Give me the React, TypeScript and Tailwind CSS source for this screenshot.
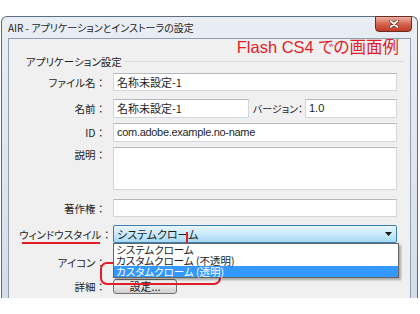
import React from "react";

const jp = "font-['Noto_Sans_CJK_JP',sans-serif] [font-feature-settings:'palt']";
const latin = "font-['Liberation_Sans','Noto_Sans_CJK_JP',sans-serif]";

function Colon() {
  return <span className="[font-feature-settings:normal]">：</span>;
}

function Row({
  label,
  labelTop = false,
  className = "",
  children,
}: {
  label: string;
  labelTop?: boolean;
  className?: string;
  children: React.ReactNode;
}) {
  return (
    <div className={`flex shrink-0 ${labelTop ? "items-start" : "items-center"} ${className}`}>
      <div
        className={`w-[87px] shrink-0 whitespace-nowrap text-right text-[10.5px] leading-[13px] ${labelTop ? "pt-[1px]" : ""}`}
      >
        {label}
        <Colon />
      </div>
      <div className="relative ml-[7px] flex flex-1 items-center">{children}</div>
    </div>
  );
}

const box = "flex items-center whitespace-nowrap border border-[#d3d6db] border-t-[#b4b8bf] bg-white pl-[3px] text-[11px]";

function CloseButton() {
  return (
    <div className="absolute right-[5px] top-[-1px] flex h-[16px] w-[37px] items-center justify-center rounded-b-[4px] border border-[#6e2c24] bg-gradient-to-b from-[#eab0a4] via-[#d4644f] to-[#c13a24]">
      <svg width="10" height="8" viewBox="0 0 10 8">
        <path d="M1.5 1 L8.5 7 M8.5 1 L1.5 7" stroke="#5a1a14" strokeWidth="3" strokeLinecap="round" />
        <path d="M1.5 1 L8.5 7 M8.5 1 L1.5 7" stroke="#ffffff" strokeWidth="1.8" strokeLinecap="round" />
      </svg>
    </div>
  );
}

export default function App() {
  return (
    <div className={`relative h-[314px] w-[420px] overflow-hidden bg-white text-[#1e1e1e] ${jp}`}>
      <div className="ml-[1px] mt-[16px] flex h-[282px] w-[417px] flex-col rounded-t-[6px] border border-b-0 border-[#5d6d80] bg-gradient-to-b from-[#e9eef4] to-[#d5dee8]">
        {/* title bar */}
        <div className="relative flex h-[21px] shrink-0 items-center whitespace-nowrap pl-[6px] text-[10px]">
          AIR - アプリケーションとインストーラの設定
          <CloseButton />
        </div>

        {/* client area */}
        <div className="mx-[6px] flex flex-1 flex-col overflow-hidden border border-b-0 border-[#8f9eb0] bg-[#f0f0f0]">
          <div
            className={`flex h-[17px] shrink-0 items-end justify-end whitespace-nowrap pr-[11px] text-[16.5px] leading-[17px] text-[#e11d2a] ${latin}`}
          >
            Flash CS4 での画面例
          </div>

          <div className="flex h-[11px] shrink-0 items-center pl-[17px] pr-[6px]">
            <span className="whitespace-nowrap text-[10.5px] leading-[11px]">アプリケーション設定</span>
            <div className="ml-[3px] h-px flex-1 bg-[#d5dfe5]" />
          </div>

          <div className="flex flex-col pl-[10px] pr-[13px]">
            <Row label="ファイル名" className="mt-[6px] h-[18px]">
              <div className={`${box} h-[18px] flex-1`}>名称未設定-1</div>
            </Row>

            <Row label="名前" className="mt-[8px] h-[19px]">
              <div className={`${box} h-[19px] w-[136px]`}>名称未設定-1</div>
              <div className="w-[56px] whitespace-nowrap pr-[2px] text-right text-[10px]">バージョン：</div>
              <div className={`${box} h-[19px] flex-1 ${latin} text-[10px]`}>1.0</div>
            </Row>

            <Row label="ID" className="mt-[5px] h-[19px]">
              <div className={`${box} h-[19px] flex-1 ${latin} text-[10px] tracking-[-0.3px]`}>
                com.adobe.example.no-name
              </div>
            </Row>

            <Row label="説明" labelTop className="mt-[5px] h-[43px]">
              <div className={`${box} h-[43px] flex-1`} />
            </Row>

            <Row label="著作権" className="mt-[9px] h-[18px]">
              <div className={`${box} h-[18px] flex-1`} />
            </Row>

            <Row label="ウィンドウスタイル" className="mt-[8px] h-[18px]">
              <div className="flex h-[18px] w-[calc(100%+1px)] items-center justify-between rounded-[2px] border border-[#3c7fb1] bg-gradient-to-b from-[#eaf6fd] via-[#c9e9fb] to-[#a7d9f5] pl-[3px] pr-[4px] text-[11px]">
                <span className="whitespace-nowrap">システムクローム</span>
                <svg width="7" height="4" viewBox="0 0 7 4">
                  <path d="M0 0 H7 L3.5 4 Z" fill="#1a1a1a" />
                </svg>
              </div>
              {/* open dropdown list */}
              <div className="absolute left-0 top-full z-10 w-[calc(100%+2px)] whitespace-nowrap border border-[#646464] bg-white text-[10.5px] leading-[11px] shadow-[2px_2px_2px_rgba(0,0,0,0.3)]">
                <div className="h-[11px] pl-[2px]">システムクローム</div>
                <div className="h-[11px] pl-[2px]">カスタムクローム (不透明)</div>
                <div className="h-[11px] bg-[#3399ff] pl-[2px] text-white">カスタムクローム (透明)</div>
              </div>
            </Row>

            <Row label="アイコン" className="mt-[9px] h-[20px]">
              <div />
            </Row>

            <Row label="詳細" className="mt-[7px] h-[15px]">
              <div className="flex h-[15px] w-[64px] items-center justify-center rounded-[3px] border border-[#707070] bg-gradient-to-b from-[#f2f2f2] via-[#e6e6e6] to-[#d0d0d0] text-[11px]">
                設定...
              </div>
            </Row>
          </div>
        </div>
      </div>

      {/* red annotations */}
      <div className="absolute left-[22px] top-[242px] h-[2px] w-[78px] bg-[#e11d2a]" />
      <div className="absolute left-[100px] top-[262px] h-[23px] w-[121px] rounded-[7px] border-2 border-[#e11d2a]" />
      <svg className="absolute left-[176px] top-[230px]" width="22" height="38" viewBox="0 0 22 38">
        <path d="M11 2 V33 M3 21 L11 34 L19 21" stroke="#e11d2a" strokeWidth="2" fill="none" />
      </svg>
    </div>
  );
}
